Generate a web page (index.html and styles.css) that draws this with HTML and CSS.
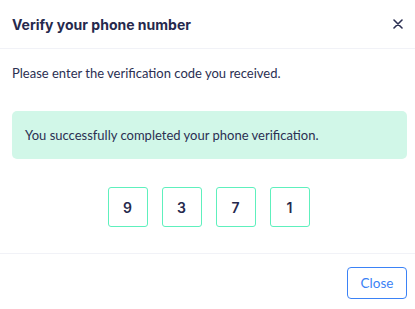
FILE: index.html
```html
<!DOCTYPE html>
<html>
<head>
<meta charset="utf-8">
<link rel="stylesheet" href="styles.css">
</head>
<body>
<div class="modal">
  <div class="header">
    <h1 class="title">Verify your phone number</h1>
    <button class="x" aria-label="Close">
      <svg width="10" height="10" viewBox="0 0 10 10"><path d="M1 1L9 9M9 1L1 9" stroke="#2b2f52" stroke-width="1.6" stroke-linecap="round"/></svg>
    </button>
  </div>
  <div class="body">
    <p class="lead">Please enter the verification code you received.</p>
    <div class="alert">You successfully completed your phone verification.</div>
    <div class="code">
      <div class="digit">9</div>
      <div class="digit">3</div>
      <div class="digit">7</div>
      <div class="digit">1</div>
    </div>
  </div>
  <div class="footer">
    <button class="close">Close</button>
  </div>
</div>
</body>
</html>
```
FILE: styles.css
```css
* { box-sizing: border-box; }
html, body { margin: 0; padding: 0; background: #fff; }
body { font-family: "Lato", "Open Sans", sans-serif; color: #2b2f52; }
.modal { width: 415px; height: 309px; display: flex; flex-direction: column; }
.header { height: 49px; display: flex; align-items: center; justify-content: space-between; padding: 0 10px 0 12px; border-bottom: 1px solid #f1f2f7; }
.title { margin: 0; font-family: "Inter", sans-serif; font-weight: 700; font-size: 14px; color: #26294d; letter-spacing: 0; }
.x { background: none; border: 0; padding: 0; width: 14px; height: 14px; display: flex; align-items: center; justify-content: center; }
.body { padding: 14px 8px 0 12px; height: 205px; border-bottom: 1px solid #f1f2f7; }
.lead { margin: 0; font-size: 13px; line-height: 20px; color: #2b2f52; }
.alert { margin-top: 28px; height: 48px; background: #d1f7e8; border-radius: 5px; padding: 0 13px; display: flex; align-items: center; font-size: 13px; color: #2b2f52; }
.code { margin-top: 28px; display: flex; justify-content: center; gap: 14px; padding-right: 2px; }
.digit { width: 40px; height: 40px; border: 1.5px solid #5ef0bd; border-radius: 3px; display: flex; align-items: center; justify-content: center; font-family: "Inter", sans-serif; font-weight: 600; font-size: 14px; color: #26294d; }
.footer { flex: 1; display: flex; justify-content: flex-end; align-items: flex-start; padding: 13px 8px 0 0; }
.close { width: 60px; height: 32px; background: #fff; border: 1px solid #3b82f6; border-radius: 4px; color: #3b82f6; font-family: "Lato", sans-serif; font-size: 13.5px; }
```
